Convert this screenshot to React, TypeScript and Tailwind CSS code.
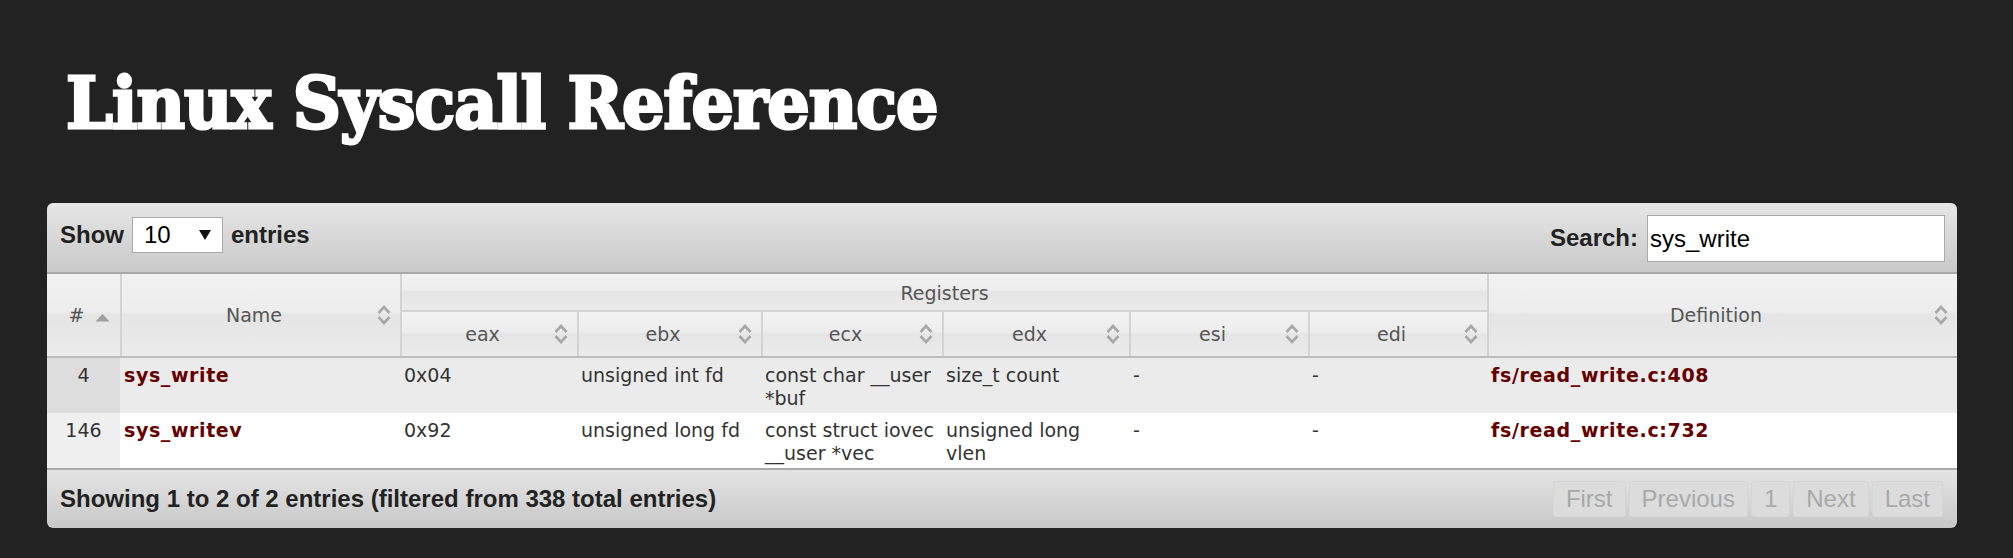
const COLS =
  "grid grid-cols-[73px_280px_177px_184px_181px_187px_179px_179px_470px]";

const HEAD_BG =
  "bg-[linear-gradient(to_bottom,#f2f2f2_0%,#ededed_45%,#e5e5e5_50%,#ebebeb_100%)]";

const REGS = ["eax", "ebx", "ecx", "edx", "esi", "edi"];

const ROWS = [
  {
    n: "4",
    name: "sys_write",
    regs: ["0x04", "unsigned int fd", "const char __user *buf", "size_t count", "-", "-"],
    def: "fs/read_write.c:408",
  },
  {
    n: "146",
    name: "sys_writev",
    regs: ["0x92", "unsigned long fd", "const struct iovec __user *vec", "unsigned long vlen", "-", "-"],
    def: "fs/read_write.c:732",
  },
];

function SortBoth() {
  return (
    <svg width="16" height="24" viewBox="0 0 16 24" className="absolute right-[8px] top-1/2 -translate-y-1/2">
      <path d="M2.5 10 L8 4 L13.5 10" fill="none" stroke="#a8a8a8" strokeWidth="2.6" />
      <path d="M2.5 14 L8 20 L13.5 14" fill="none" stroke="#a8a8a8" strokeWidth="2.6" />
    </svg>
  );
}

function SortAsc() {
  return (
    <svg width="15" height="9" viewBox="0 0 15 9" className="absolute right-[10px] top-1/2 -translate-y-[2px]">
      <path d="M0.5 8.5 L7.5 1 L14.5 8.5 Z" fill="#a0a0a0" />
    </svg>
  );
}

function Th({
  children,
  className = "",
  sort = "both",
}: {
  children: React.ReactNode;
  className?: string;
  sort?: "both" | "asc" | "none";
}) {
  return (
    <div
      className={`relative flex items-center justify-center pl-[4px] pr-[18px] text-[#555] ${HEAD_BG} ${className}`}
    >
      <span>{children}</span>
      {sort === "both" && <SortBoth />}
      {sort === "asc" && <SortAsc />}
    </div>
  );
}

export default function App() {
  return (
    <div className="min-h-[558px] bg-[#222222] pt-[68px]">
      <h1 className="ml-[66px] origin-left scale-x-[0.94] font-['DejaVu_Serif',serif] text-[71px] font-bold leading-[71px] tracking-[-1px] text-white [-webkit-text-stroke:3px_white]">
        Linux Syscall Reference
      </h1>

      <div className="ml-[47px] mt-[64px] w-[1910px] overflow-hidden rounded-[6px]">
        {/* toolbar */}
        <div className="flex h-[71px] items-center justify-between border-b-2 border-[#a9a9a9] bg-[linear-gradient(to_bottom,#e6e6e6,#c9c9c9)] pl-[13px] pr-[12px] font-['Liberation_Sans',Arial,sans-serif] text-[24px] font-bold text-[#222]">
          <div className="-mt-[5px] flex items-center gap-[8px]">
            <span>Show</span>
            <div className="flex h-[36px] w-[91px] items-center justify-between border border-[#aaa] bg-white pl-[11px] pr-[11px] font-normal text-black">
              <span>10</span>
              <svg width="12" height="10" viewBox="0 0 12 10">
                <path d="M0 0 H12 L6 10 Z" fill="#111" />
              </svg>
            </div>
            <span>entries</span>
          </div>
          <div className="flex items-center gap-[9px]">
            <span>Search:</span>
            <input
              readOnly
              value="sys_write"
              className="mt-[2px] h-[47px] w-[298px] border border-[#aaa] bg-white px-[2px] font-['Liberation_Sans',Arial,sans-serif] text-[24px] font-normal text-black outline-none"
            />
          </div>
        </div>

        {/* table */}
        <div className="font-['DejaVu_Sans',Verdana,sans-serif] text-[19px] leading-[23px]">
          <div className={`${COLS} grid-rows-[38px_44px] border-b-2 border-[#bdbdbd]`}>
            <Th className="row-span-2" sort="asc">#</Th>
            <Th className="row-span-2 border-l-2 border-[#d3d3d3]">Name</Th>
            <div
              className={`col-span-6 flex items-center justify-center border-b-2 border-l-2 border-[#d3d3d3] pt-[2px] text-[#555] ${HEAD_BG}`}
            >
              Registers
            </div>
            <Th className="row-span-2 border-l-2 border-[#d3d3d3]">Definition</Th>
            {REGS.map((r) => (
              <Th key={r} className="border-l-2 border-[#d3d3d3]">
                {r}
              </Th>
            ))}
          </div>

          {ROWS.map((row, i) => (
            <div
              key={row.n}
              className={`${COLS} h-[55px] text-[#333] ${i === 0 ? "bg-[#ebebeb]" : "bg-white"}`}
            >
              <div className={`pt-[6px] text-center ${i === 0 ? "bg-[#dddddd]" : "bg-[#efefef]"}`}>
                {row.n}
              </div>
              <div className="px-[4px] pt-[6px] font-bold tracking-[0.6px] text-[#660000]">{row.name}</div>
              {row.regs.map((v, j) => (
                <div key={j} className="px-[4px] pt-[6px]">
                  {v}
                </div>
              ))}
              <div className="px-[4px] pt-[6px] font-bold tracking-[0.65px] text-[#660000]">{row.def}</div>
            </div>
          ))}
        </div>

        {/* footer */}
        <div className="flex h-[60px] items-center justify-between border-t-2 border-[#a9a9a9] bg-[linear-gradient(to_bottom,#e4e4e4,#c8c8c8)] pl-[13px] pr-[14px] font-['Liberation_Sans',Arial,sans-serif] text-[24px]">
          <span className="font-bold text-[#222]">
            Showing 1 to 2 of 2 entries (filtered from 338 total entries)
          </span>
          <div className="flex gap-[3px] text-[#a9a9a9]">
            {["First", "Previous", "1", "Next", "Last"].map((p) => (
              <span
                key={p}
                className="flex h-[36px] items-center rounded-[3px] border border-[#d6d6d6] bg-[#dcdcdc] px-[12px]"
              >
                {p}
              </span>
            ))}
          </div>
        </div>
      </div>
    </div>
  );
}
